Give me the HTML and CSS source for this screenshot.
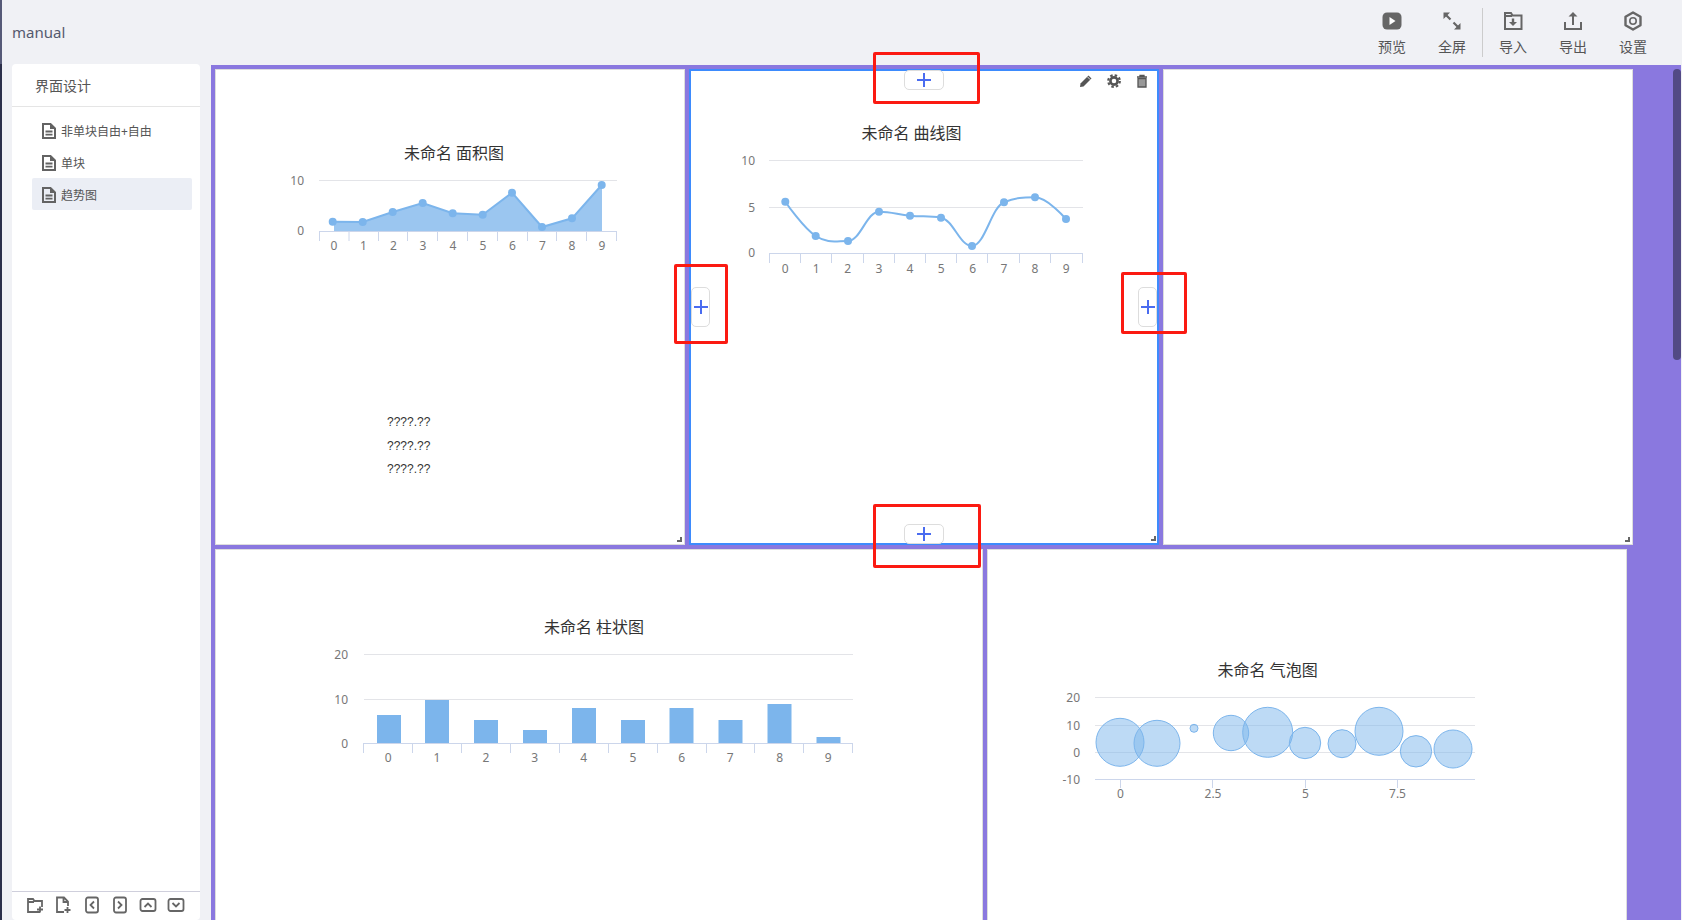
FILE: index.html
```html
<!DOCTYPE html>
<html lang="en">
<head>
<meta charset="UTF-8">
<meta name="viewport" content="width=device-width, initial-scale=1.0">
<title>manual</title>
<link rel="stylesheet" href="styles.css">
</head>
<body>

<svg class="sprites" aria-hidden="true">
    <symbol id="doc" viewBox="0 0 14 16">
        <path d="M1 1h7.500L13 5.500V15H1z" fill="none" stroke="currentColor" stroke-width="2"/>
        <path d="M8 1l5 5H8z" fill="currentColor"/>
        <path d="M3.500 8.500h7M3.500 11.700h7" fill="none" stroke="currentColor" stroke-width="1.800"/>
    </symbol>
</svg>

<div class="app">
    <div class="edge"></div>
    <div class="main">
        <header class="header">
            <div class="project">manual</div>
            <div class="tools">
                <div class="tool">
                    <svg width="20" height="20" viewBox="0 0 20 20"><rect x="0.500" y="1.500" width="19" height="17" rx="4.500" fill="#666"/><path d="M7.500 6l6 4-6 4z" fill="#fff"/></svg>
                    <span>预览</span>
                </div>
                <div class="tool">
                    <svg width="20" height="20" viewBox="0 0 20 20"><path d="M1.500 1.500h6.500l-6.500 6.500z M18.500 18.500h-6.500l6.500-6.500z" fill="#666"/><path d="M3.500 3.500l5 5M16.500 16.500l-5-5" stroke="#666" stroke-width="2.200"/></svg>
                    <span>全屏</span>
                </div>
                <div class="tool-sep"></div>
                <div class="tool">
                    <svg width="20" height="20" viewBox="0 0 20 20"><path d="M2 18V2h6l1.500 2.500H18.500V18z M2 5h7" fill="none" stroke="#666" stroke-width="2"/><path d="M8.800 7.500h2.400v3.500H14l-4 4-4-4h2.800z" fill="#666"/></svg>
                    <span>导入</span>
                </div>
                <div class="tool">
                    <svg width="20" height="20" viewBox="0 0 20 20"><path d="M2 11v7h16v-7" fill="none" stroke="#666" stroke-width="2"/><path d="M10 1l4.500 4.500h-3.500V14H9V5.500H5.500z" fill="#666"/></svg>
                    <span>导出</span>
                </div>
                <div class="tool">
                    <svg width="20" height="20" viewBox="0 0 20 20"><path d="M10 1.500l7.500 4.300v8.400L10 18.500l-7.500-4.300V5.800z" fill="none" stroke="#666" stroke-width="2.400" stroke-linejoin="round"/><circle cx="10" cy="10" r="3.200" fill="none" stroke="#666" stroke-width="1.600"/></svg>
                    <span>设置</span>
                </div>
            </div>
        </header>

        <div class="body">
            <aside class="sidebar">
                <div class="side-title">界面设计</div>
                <ul class="pages">
                    <li class="page"><svg class="doc"><use href="#doc"/></svg>非单块自由+自由</li>
                    <li class="page"><svg class="doc"><use href="#doc"/></svg>单块</li>
                    <li class="page active"><svg class="doc"><use href="#doc"/></svg>趋势图</li>
                </ul>
                <div class="side-foot">
                    <svg width="18" height="18" viewBox="1 0 18 18"><path d="M14 16H2V3h5l1.500 2H16v6 M2 6h6" fill="none" stroke="#666" stroke-width="1.800"/><path d="M14 10.500v6M11 13.500h6" stroke="#666" stroke-width="1.800"/></svg>
                    <svg width="18" height="18" viewBox="1 0 18 18"><path d="M10 16H3V1.500h7l4 4V10 M9.500 1.500v4.500H14" fill="none" stroke="#666" stroke-width="1.800"/><path d="M13.500 11v6M10.500 14h6" stroke="#666" stroke-width="1.800"/></svg>
                    <svg width="18" height="18" viewBox="0 0 18 18"><rect x="3" y="1.500" width="12" height="15" rx="2" fill="none" stroke="#666" stroke-width="1.800"/><path d="M11 5.500L7.500 9l3.500 3.500" fill="none" stroke="#666" stroke-width="1.800"/></svg>
                    <svg width="18" height="18" viewBox="0 0 18 18"><rect x="3" y="1.500" width="12" height="15" rx="2" fill="none" stroke="#666" stroke-width="1.800"/><path d="M7 5.500L10.500 9 7 12.500" fill="none" stroke="#666" stroke-width="1.800"/></svg>
                    <svg width="18" height="18" viewBox="0 0 18 18"><rect x="1.500" y="3" width="15" height="12" rx="2" fill="none" stroke="#666" stroke-width="1.800"/><path d="M5.500 11L9 7.500l3.500 3.500" fill="none" stroke="#666" stroke-width="1.800"/></svg>
                    <svg width="18" height="18" viewBox="0 0 18 18"><rect x="1.500" y="3" width="15" height="12" rx="2" fill="none" stroke="#666" stroke-width="1.800"/><path d="M5.500 7L9 10.500 12.500 7" fill="none" stroke="#666" stroke-width="1.800"/></svg>
                </div>
            </aside>

            <section class="canvas">
                <div class="row row-top">
                    <div class="cell">
                        <svg class="chart" width="468" height="341" viewBox="216 70 468 341">
                            <text class="chart-title" x="454" y="155">未命名 面积图</text>
                            <path class="grid" d="M319 180.500H617"/>
                            <path class="axis" d="M319 231.500H617M319.500 231V241M349 231V241M378.500 231V241M407.500 231V241M437.500 231V241M467.500 231V241M497.500 231V241M527.500 231V241M556.500 231V241M586.500 231V241M616.500 231V241"/>
                            <path class="area" d="M334 231V222L362.700 222 392.700 212 422.700 203 452.700 213.300 482.700 214.700 512 192.700 542 227 572 218.300 602 185V231z"/>
                            <path class="line" d="M332.700 221.700L362.700 222 392.700 212 422.700 203 452.700 213.300 482.700 214.700 512 192.700 542 227 572 218.300 601.700 185"/>
                            <g class="dots">
                                <circle cx="332.700" cy="221.700" r="4"/><circle cx="362.700" cy="222" r="4"/><circle cx="392.700" cy="212" r="4"/><circle cx="422.700" cy="203" r="4"/><circle cx="452.700" cy="213.300" r="4"/><circle cx="482.700" cy="214.700" r="4"/><circle cx="512" cy="192.700" r="4"/><circle cx="542" cy="227" r="4"/><circle cx="572" cy="218.300" r="4"/><circle cx="601.700" cy="185" r="4"/>
                            </g>
                            <g class="y-labels">
                                <text x="304" y="184.500">10</text><text x="304" y="235">0</text>
                            </g>
                            <g class="x-labels">
                                <text x="334" y="249.500">0</text><text x="363.500" y="249.500">1</text><text x="393.500" y="249.500">2</text><text x="423" y="249.500">3</text><text x="453" y="249.500">4</text><text x="483" y="249.500">5</text><text x="512.500" y="249.500">6</text><text x="542.500" y="249.500">7</text><text x="572" y="249.500">8</text><text x="602" y="249.500">9</text>
                            </g>
                        </svg>
                        <div class="notes">
                            <p>????.??</p>
                            <p>????.??</p>
                            <p>????.??</p>
                        </div>
                        <div class="handle"></div>
                    </div>

                    <div class="cell selected">
                        <svg class="chart" width="466" height="230" viewBox="691 71 466 230">
                            <text class="chart-title" x="911.500" y="135">未命名 曲线图</text>
                            <path class="grid" d="M769 160.500H1083M769 207.500H1083"/>
                            <path class="axis" d="M769 253.500H1083M769.500 253V263M800.500 253V263M831.500 253V263M863.500 253V263M894.500 253V263M925.500 253V263M956.500 253V263M987.500 253V263M1019.500 253V263M1050.500 253V263M1082.500 253V263"/>
                            <path class="line" d="M785.300 201.700C785.300 201.700 803.500 228.200 815.700 236C828.100 243.800 835.100 241 848 241C860.400 241 866.600 211.700 879 211.700C891.400 211.700 897.600 214.500 910 215.700C922.400 216.900 928.600 215.700 941 217.700C953.400 219.700 959.600 246 972 246C984.800 246 991.200 207.300 1004 202.300C1016.400 197.300 1022.600 197.300 1035 197.300C1047.400 197.300 1066 219 1066 219"/>
                            <g class="dots">
                                <circle cx="785.300" cy="201.700" r="4"/><circle cx="815.700" cy="236" r="4"/><circle cx="848" cy="241" r="4"/><circle cx="879" cy="211.700" r="4"/><circle cx="910" cy="215.700" r="4"/><circle cx="941" cy="217.700" r="4"/><circle cx="972" cy="246" r="4"/><circle cx="1004" cy="202.300" r="4"/><circle cx="1035" cy="197.300" r="4"/><circle cx="1066" cy="219" r="4"/>
                            </g>
                            <g class="y-labels">
                                <text x="755" y="165">10</text><text x="755" y="211.500">5</text><text x="755" y="257">0</text>
                            </g>
                            <g class="x-labels">
                                <text x="785.300" y="273">0</text><text x="816.300" y="273">1</text><text x="847.700" y="273">2</text><text x="879" y="273">3</text><text x="910" y="273">4</text><text x="941.300" y="273">5</text><text x="972.700" y="273">6</text><text x="1004" y="273">7</text><text x="1035" y="273">8</text><text x="1066.300" y="273">9</text>
                            </g>
                        </svg>
                        <div class="cell-tools">
                            <svg width="14" height="14" viewBox="0 0 14 14"><path d="M9.500 1.500l3 3-8 8L1 13l.5-3.500z" fill="#555"/><path d="M8.300 2.700l3 3" stroke="#fff" stroke-width="0.800"/></svg>
                            <svg width="14" height="14" viewBox="0 0 14 14"><circle cx="7" cy="7" r="3.600" fill="none" stroke="#555" stroke-width="2.600"/><circle cx="7" cy="7" r="5.800" fill="none" stroke="#555" stroke-width="2.200" stroke-dasharray="2.500 2.050"/></svg>
                            <svg width="14" height="14" viewBox="0 0 14 14"><path d="M2 3h10M5 3V1.500h4V3" fill="none" stroke="#555" stroke-width="1.300"/><path d="M3 4.500h8V13H3z" fill="#999" stroke="#555" stroke-width="1.300"/></svg>
                        </div>
                        <div class="add add-top"><svg class="plus" viewBox="0 0 14 14"><path d="M7 0v14M0 7h14"/></svg></div>
                        <div class="add add-bottom"><svg class="plus" viewBox="0 0 14 14"><path d="M7 0v14M0 7h14"/></svg></div>
                        <div class="add add-left"><svg class="plus" viewBox="0 0 14 14"><path d="M7 0v14M0 7h14"/></svg></div>
                        <div class="add add-right"><svg class="plus" viewBox="0 0 14 14"><path d="M7 0v14M0 7h14"/></svg></div>
                        <div class="handle"></div>
                    </div>

                    <div class="cell">
                        <div class="handle"></div>
                    </div>
                </div>

                <div class="row row-bottom">
                    <div class="cell">
                        <svg class="chart" width="766" height="300" viewBox="216 550 766 300">
                            <text class="chart-title" x="594" y="629">未命名 柱状图</text>
                            <path class="grid" d="M364 654.500H853M364 699.500H853"/>
                            <g class="bars">
                                <rect x="377" y="715" width="24" height="28.300"/><rect x="425" y="700" width="24" height="43.300"/><rect x="474" y="720" width="24" height="23.300"/><rect x="523" y="730" width="24" height="13.300"/><rect x="572" y="708" width="24" height="35.300"/><rect x="621" y="720" width="24" height="23.300"/><rect x="669.500" y="708" width="24" height="35.300"/><rect x="718.500" y="720" width="24" height="23.300"/><rect x="767.500" y="704" width="24" height="39.300"/><rect x="816.500" y="737" width="24" height="6.300"/>
                            </g>
                            <path class="axis" d="M364 743.500H853M363.500 743V753M412.500 743V753M461.500 743V753M510.500 743V753M559.500 743V753M608.500 743V753M657.500 743V753M706.500 743V753M754.500 743V753M803.500 743V753M852.500 743V753"/>
                            <g class="y-labels">
                                <text x="348" y="658.500">20</text><text x="348" y="703.500">10</text><text x="348" y="747.500">0</text>
                            </g>
                            <g class="x-labels">
                                <text x="388.300" y="762">0</text><text x="437" y="762">1</text><text x="486" y="762">2</text><text x="534.600" y="762">3</text><text x="583.600" y="762">4</text><text x="633" y="762">5</text><text x="681.600" y="762">6</text><text x="730.300" y="762">7</text><text x="779.600" y="762">8</text><text x="828.300" y="762">9</text>
                            </g>
                        </svg>
                    </div>

                    <div class="cell">
                        <svg class="chart" width="638" height="300" viewBox="988 550 638 300">
                            <text class="chart-title" x="1267.700" y="672">未命名 气泡图</text>
                            <path class="grid" d="M1095 697.500H1475M1095 725.500H1475M1095 752.500H1475"/>
                            <path class="axis" d="M1095 779.500H1475M1120.500 779V788M1212.500 779V788M1305.500 779V788M1397.500 779V788"/>
                            <g class="bubbles">
                                <circle cx="1120" cy="742.300" r="24"/><circle cx="1157" cy="743.300" r="23"/><circle cx="1194" cy="728.300" r="4"/><circle cx="1231" cy="733" r="17.700"/><circle cx="1267.700" cy="732.300" r="25"/><circle cx="1305" cy="743" r="15.700"/><circle cx="1342" cy="743.700" r="14"/><circle cx="1379" cy="731.300" r="24"/><circle cx="1416" cy="751.300" r="15.700"/><circle cx="1453" cy="749" r="19"/>
                            </g>
                            <g class="y-labels">
                                <text x="1080" y="701.500">20</text><text x="1080" y="729.500">10</text><text x="1080" y="756.500">0</text><text x="1080" y="783.500">-10</text>
                            </g>
                            <g class="x-labels">
                                <text x="1120.500" y="798">0</text><text x="1213" y="798">2.5</text><text x="1305.500" y="798">5</text><text x="1397.500" y="798">7.5</text>
                            </g>
                        </svg>
                    </div>
                </div>

                <div class="scroll-thumb"></div>
            </section>
        </div>
    </div>

    <!-- red boxes drawn over the screenshot -->
    <div class="mark mark-top"></div>
    <div class="mark mark-bottom"></div>
    <div class="mark mark-left"></div>
    <div class="mark mark-right"></div>
</div>

</body>
</html>
```

FILE: styles.css
```css
html, body {
    margin: 0;
    height: 100%;
    overflow: hidden;
}

body {
    font-family: "Noto Sans", "Noto Sans CJK SC", sans-serif;
    color: #555;
}

.sprites {
    position: absolute;
    width: 0;
    height: 0;
}

.app {
    position: relative;
    display: flex;
    height: 920px;
    background-color: #f0f1f5;
}

.edge {
    width: 2px;
    background: linear-gradient(#565a78 64px, #2b2f4a 64px);
}

.main {
    flex: 1;
    display: flex;
    flex-direction: column;
    min-width: 0;
}

/* header */
.header {
    display: flex;
    justify-content: space-between;
    align-items: center;
    height: 64px;
    padding: 0 19px 0 10px;
    box-sizing: border-box;
    flex-shrink: 0;
}

.project {
    font-size: 15px;
    color: #555a6e;
}

.tools {
    display: flex;
    align-items: center;
}

.tool {
    display: flex;
    flex-direction: column;
    align-items: center;
    width: 60px;
    padding-top: 3px;
    font-size: 14px;
    line-height: 20px;
}

.tool svg {
    display: block;
    margin-bottom: 6px;
}

.tool-sep {
    width: 1px;
    height: 49px;
    background-color: #ccc;
}

/* sidebar */
.body {
    flex: 1;
    display: flex;
    min-height: 0;
}

.sidebar {
    display: flex;
    flex-direction: column;
    width: 188px;
    margin-left: 10px;
    background-color: #fff;
    border-radius: 4px;
    flex-shrink: 0;
}

.side-title {
    height: 42px;
    line-height: 44px;
    padding-left: 23px;
    font-size: 14px;
    border-bottom: 1px solid #e5e5e5;
}

.pages {
    flex: 1;
    list-style: none;
    margin: 0;
    padding: 7px 8px 0 20px;
}

.page {
    display: flex;
    align-items: center;
    height: 32px;
    padding: 2px 0 0 10px;
    box-sizing: border-box;
    font-size: 12px;
    border-radius: 2px;
}

.page.active {
    background-color: #ebeef5;
}

.doc {
    width: 14px;
    height: 16px;
    margin-right: 5px;
    color: #636363;
}

.side-foot {
    display: flex;
    align-items: center;
    gap: 10px;
    height: 29px;
    padding: 0 0 3px 15px;
    box-sizing: border-box;
    border-top: 1px solid #cfcfdc;
}

/* canvas */
.canvas {
    position: relative;
    flex: 1;
    min-width: 0;
    margin: 1px 1px 0 11px;
    padding: 4px;
    background-color: #8a78df;
    overflow: hidden;
}

.row {
    display: grid;
    column-gap: 4px;
}

.row-top {
    grid-template-columns: 470px 470px 470px;
    height: 476px;
}

.row-bottom {
    grid-template-columns: 768px 640px;
    height: 400px;
    margin-top: 4px;
}

.cell {
    position: relative;
    background-color: #fff;
    border: 1px solid #ddd;
    box-sizing: border-box;
}

.cell.selected {
    border: 2px solid #3d8bfd;
}

.chart {
    display: block;
}

.chart-title {
    font-size: 16px;
    fill: #333;
    text-anchor: middle;
    dominant-baseline: middle;
}

.grid {
    stroke: #e3e4e8;
    fill: none;
}

.axis {
    stroke: #ccd6eb;
    fill: none;
}

.area {
    fill: #9bc6f0;
}

.line {
    stroke: #7cb5ec;
    stroke-width: 2;
    fill: none;
}

.dots {
    fill: #7cb5ec;
}

.bars {
    fill: #7cb5ec;
}

.bubbles {
    fill: rgba(124, 181, 236, 0.5);
    stroke: #7cb5ec;
}

.y-labels, .x-labels {
    font-size: 12px;
    fill: #777;
}

.y-labels {
    text-anchor: end;
}

.x-labels {
    text-anchor: middle;
}

.notes {
    padding-left: 171px;
    font-family: "Liberation Sans", sans-serif;
    font-size: 12px;
    line-height: 23.5px;
    color: #333;
}

.notes p {
    margin: 0;
}

.handle {
    position: absolute;
    right: 2px;
    bottom: 2px;
    width: 3px;
    height: 3px;
    border-right: 2px solid #666;
    border-bottom: 2px solid #666;
}

.selected .handle {
    right: 1px;
}

.cell-tools {
    position: absolute;
    top: 3px;
    right: 8px;
    display: flex;
    gap: 14px;
}

.add {
    position: absolute;
    display: flex;
    align-items: center;
    justify-content: center;
    background-color: #fff;
    border: 1px solid #ddd;
    border-radius: 5px;
    box-sizing: border-box;
}

.add-top, .add-bottom {
    left: 50%;
    width: 40px;
    height: 20px;
    margin-left: -20px;
}

.add-top {
    top: -1px;
}

.add-bottom {
    bottom: -1px;
}

.add-left, .add-right {
    top: 50%;
    width: 19px;
    height: 40px;
    margin-top: -20px;
}

.add-left {
    left: 0;
}

.add-right {
    right: 0;
}

.plus {
    width: 14px;
    height: 14px;
    stroke: #4a6cf0;
    stroke-width: 2;
    fill: none;
}

.scroll-thumb {
    position: absolute;
    top: 4px;
    right: 0;
    width: 8px;
    height: 291px;
    border-radius: 4px;
    background-color: #524a85;
}

.mark {
    position: absolute;
    border: 3px solid #fb1a12;
    border-radius: 2px;
    box-sizing: border-box;
}

.mark-top {
    left: 873px;
    top: 52px;
    width: 107px;
    height: 52px;
}

.mark-bottom {
    left: 873px;
    top: 504px;
    width: 108px;
    height: 64px;
}

.mark-left {
    left: 674px;
    top: 264px;
    width: 54px;
    height: 80px;
}

.mark-right {
    left: 1121px;
    top: 272px;
    width: 66px;
    height: 62px;
}
```
